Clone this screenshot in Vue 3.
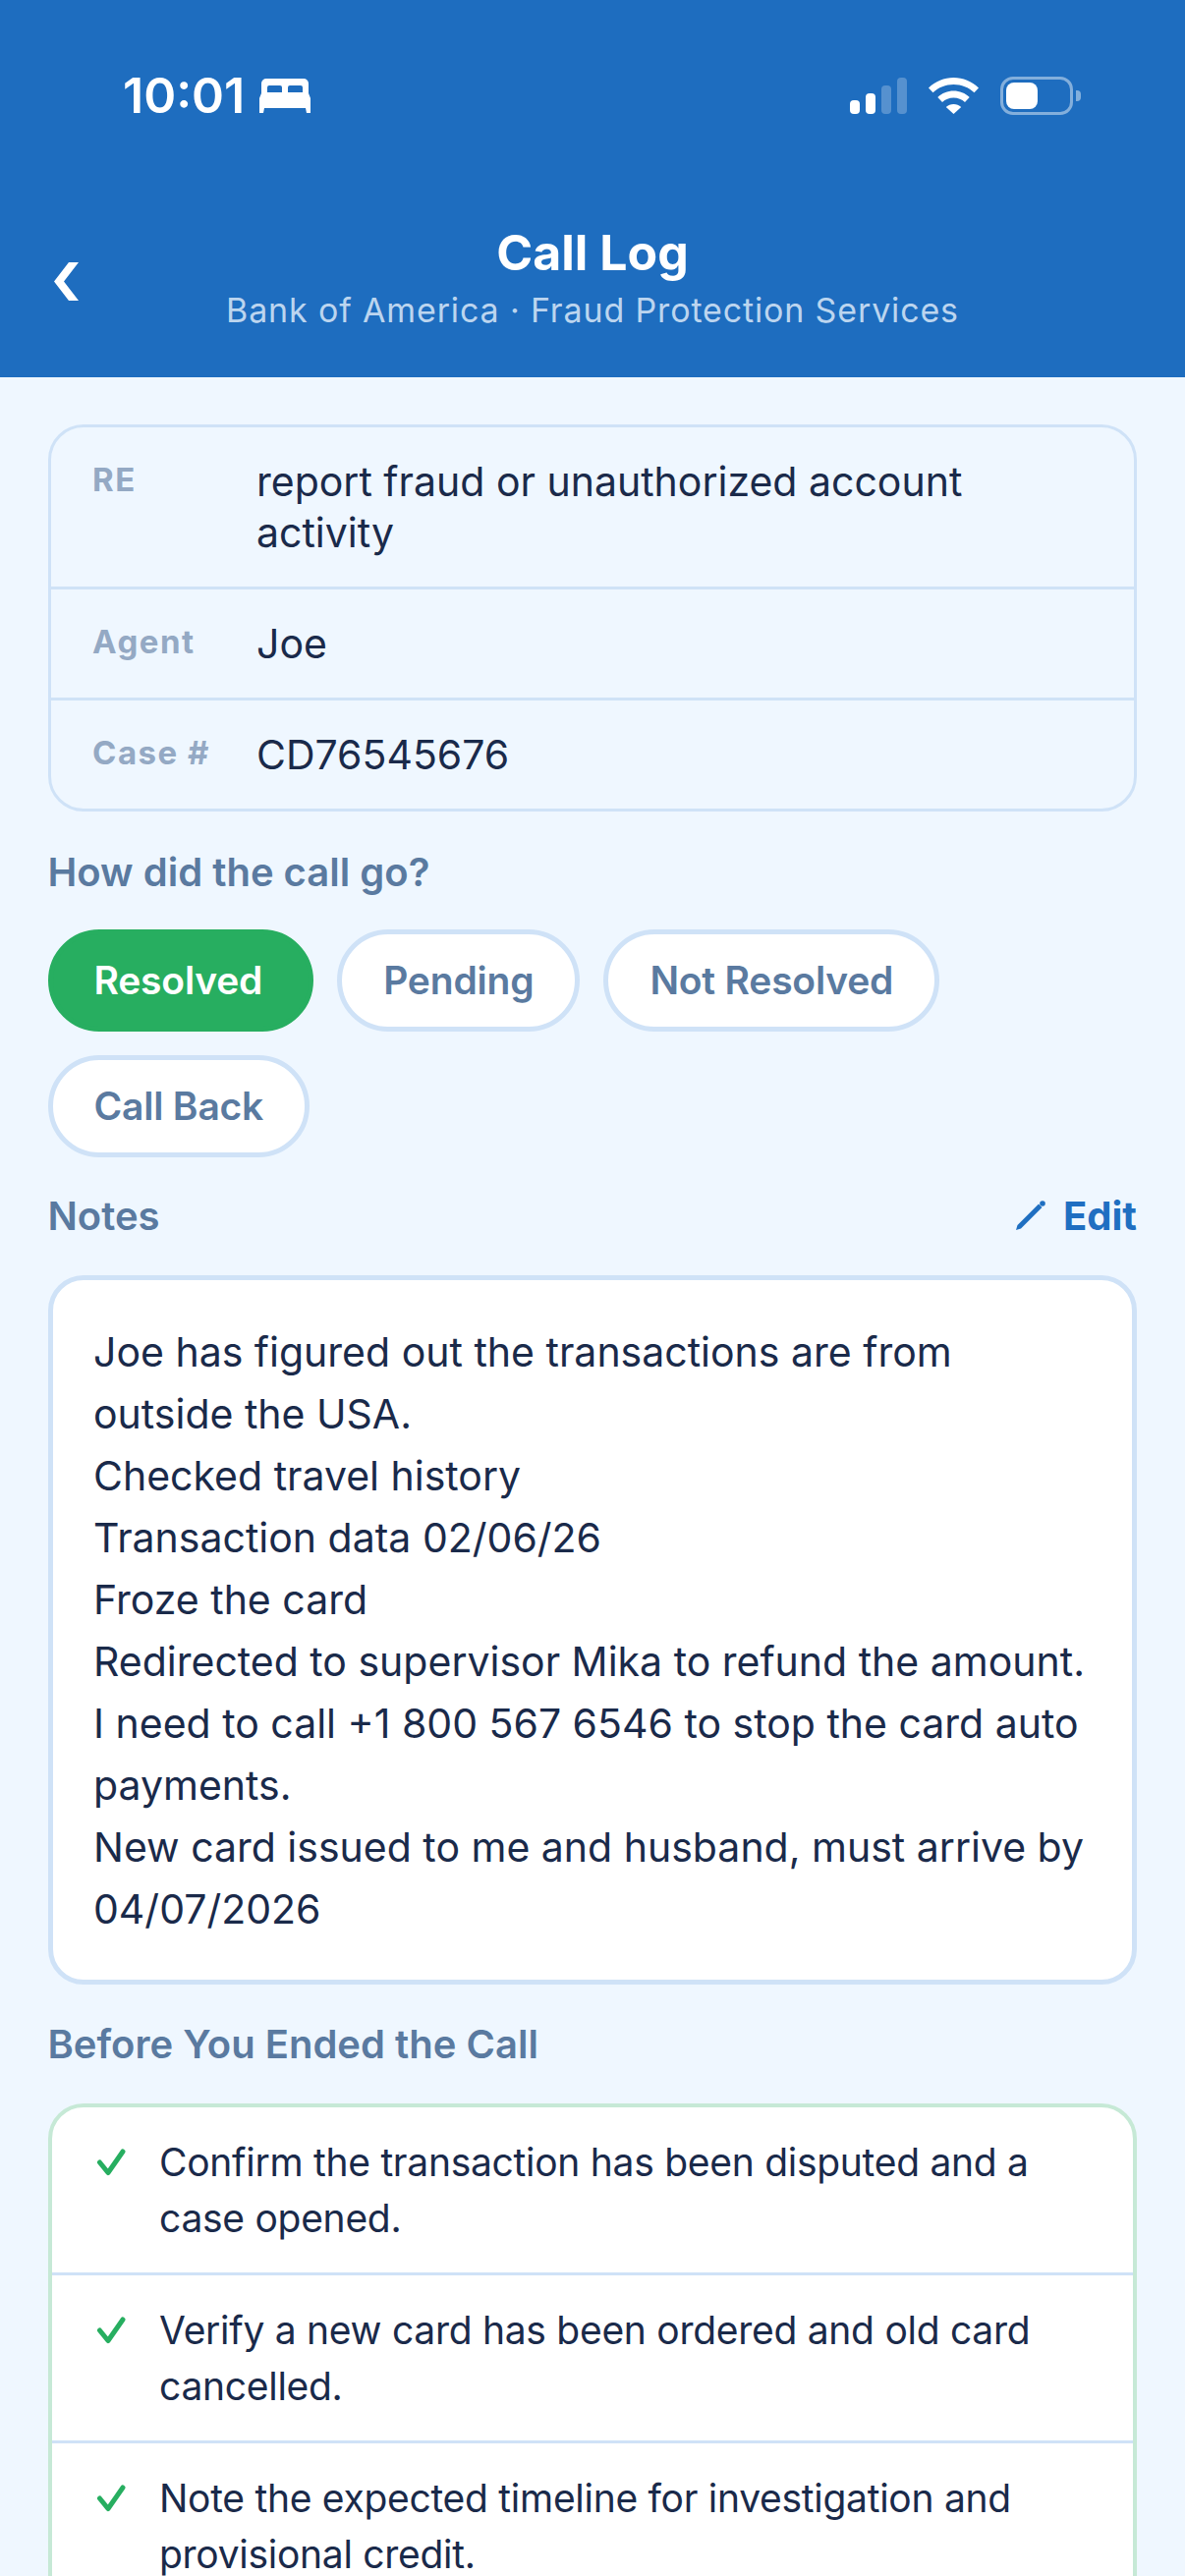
<script setup>
const info = [
  { label: 'RE', value: 'report fraud or unauthorized account activity' },
  { label: 'Agent', value: 'Joe' },
  { label: 'Case #', value: 'CD76545676' }
];

const statuses = [
  { name: 'Resolved', active: true },
  { name: 'Pending', active: false },
  { name: 'Not Resolved', active: false },
  { name: 'Call Back', active: false }
];

const notes = [
  'Joe has figured out the transactions are from outside the USA.',
  'Checked travel history',
  'Transaction data 02/06/26',
  'Froze the card',
  'Redirected to supervisor Mika to refund the amount.',
  'I need to call +1 800 567 6546 to stop the card auto payments.',
  'New card issued to me and husband, must arrive by 04/07/2026'
];

const checks = [
  'Confirm the transaction has been disputed and a case opened.',
  'Verify a new card has been ordered and old card cancelled.',
  'Note the expected timeline for investigation and provisional credit.'
];
</script>

<template>
  <div class="screen">
    <header class="top">
      <div class="status-bar">
        <div class="status-left">
          <span class="time">10:01</span>
          <svg class="bed" viewBox="0 0 52 35" width="52" height="35">
            <path fill="#fff" fill-rule="evenodd" d="M7 0h38a5 5 0 0 1 5 5v10l2 5v15h-4l-1-5H5l-1 5H0V20l2-5V5a5 5 0 0 1 5-5zM10 7a2 2 0 0 0-2 2v5h15V9a2 2 0 0 0-2-2zM31 7a2 2 0 0 0-2 2v5h15V9a2 2 0 0 0-2-2z"/>
          </svg>
        </div>
        <div class="status-right">
          <div class="signal">
            <i class="b1"></i><i class="b2"></i><i class="b3 dim"></i><i class="b4 dim"></i>
          </div>
          <svg class="wifi" viewBox="0 0 51 37" width="51" height="37">
            <path fill="#fff" d="M25.500 0C35 0 44 3.800 51 10.400l-4.500 4.900C41 10 33.500 7 25.500 7S10 10 4.500 15.300L0 10.400C7 3.800 16 0 25.500 0z"/>
            <path fill="#fff" d="M25.500 13.500c6 0 11.800 2.300 16.200 6.500l-4.700 5c-3.100-3-7.200-4.600-11.500-4.600S17.100 22 14 25l-4.700-5c4.400-4.200 10.200-6.500 16.200-6.500z"/>
            <path fill="#fff" d="M25.500 27c2.900 0 5.600 1 7.700 2.900L25.500 37l-7.700-7.100c2.100-1.900 4.800-2.900 7.700-2.900z"/>
          </svg>
          <div class="battery">
            <div class="battery-body"><div class="battery-fill"></div></div>
            <div class="battery-nub"></div>
          </div>
        </div>
      </div>
      <div class="nav">
        <svg class="back" viewBox="0 0 25 39" width="25" height="39">
          <path d="M25 0H15L0 19.500 15 39h10L10 19.500z" fill="#fff"/>
        </svg>
        <h1>Call Log</h1>
        <p>Bank of America · Fraud Protection Services</p>
      </div>
    </header>

    <main class="content">
      <section class="info-card">
        <div v-for="row in info" :key="row.label" class="info-row">
          <span class="info-label">{{ row.label }}</span>
          <span class="info-value">{{ row.value }}</span>
        </div>
      </section>

      <h2 class="section-title call-title">How did the call go?</h2>
      <div class="pills">
        <span v-for="s in statuses" :key="s.name" :class="['pill', { active: s.active }]">{{ s.name }}</span>
      </div>

      <div class="notes-head">
        <h2 class="section-title">Notes</h2>
        <span class="edit">
          <svg viewBox="0 0 32 32" width="32" height="32">
            <path d="M2 30 3.500 25 25 3.500l3.500 3.500L7 28.500z" fill="#1f6fc1"/>
            <circle cx="29" cy="3" r="2.800" fill="#1f6fc1"/>
          </svg>
          Edit
        </span>
      </div>
      <section class="notes-box">
        <p v-for="line in notes" :key="line">{{ line }}</p>
      </section>

      <h2 class="section-title before-title">Before You Ended the Call</h2>
      <section class="check-card">
        <div v-for="item in checks" :key="item" class="check-row">
          <svg class="tick" viewBox="0 0 30 30" width="30" height="30">
            <path d="M3.500 16l8.500 10.500L27 5" fill="none" stroke="#27ae60" stroke-width="5" stroke-linecap="round" stroke-linejoin="round"/>
          </svg>
          <span>{{ item }}</span>
        </div>
      </section>
    </main>
  </div>
</template>

<style scoped>
.screen {
  width: 1206px;
  height: 2622px;
  overflow: hidden;
  background: #eff7ff;
  font-family: Inter, "Liberation Sans", sans-serif;
}

.top {
  height: 384px;
  box-sizing: border-box;
  background: #1e6dbf;
  color: #fff;
}

.status-bar {
  display: flex;
  justify-content: space-between;
  align-items: center;
  padding: 78px 106px 0 125px;
  height: 39px;
}

.status-left {
  display: flex;
  align-items: center;
  gap: 15px;
}

.time {
  font-size: 50px;
  font-weight: 600;
  line-height: 39px;
}

.status-right {
  display: flex;
  align-items: center;
}

.signal {
  display: flex;
  align-items: flex-end;
  gap: 6px;
  height: 37px;
  margin-right: 22px;
}

.signal i {
  display: block;
  width: 10px;
  border-radius: 4px;
  background: #fff;
}

.signal .dim {
  background: rgba(255, 255, 255, 0.25);
}

.b1 { height: 14px; }
.b2 { height: 21px; }
.b3 { height: 29px; }
.b4 { height: 37px; }

.wifi {
  margin-right: 22px;
}

.battery {
  display: flex;
  align-items: center;
  gap: 3px;
}

.battery-body {
  width: 74px;
  height: 39px;
  box-sizing: border-box;
  border: 3px solid rgba(255, 255, 255, 0.45);
  border-radius: 13px;
  padding: 3px;
}

.battery-fill {
  width: 32px;
  height: 100%;
  border-radius: 8px;
  background: #fff;
}

.battery-nub {
  width: 5px;
  height: 11px;
  border-radius: 0 4px 4px 0;
  background: rgba(255, 255, 255, 0.45);
}

.nav {
  position: relative;
  margin-top: 110px;
  text-align: center;
}

.back {
  position: absolute;
  left: 55px;
  top: 40px;
}

.nav h1 {
  margin: 0;
  font-size: 50px;
  line-height: 60px;
  font-weight: 700;
}

.nav p {
  margin: 7px 0 0;
  font-size: 34px;
  line-height: 44px;
  letter-spacing: 0.85px;
  color: #bcd5ef;
}

.content {
  padding: 48px 49px 0 48.5px;
}

.info-card {
  border: 3px solid #cfe2f7;
  border-radius: 36px;
}

.info-row {
  display: grid;
  grid-template-columns: 167px 1fr;
  padding: 29px 42.5px;
  border-bottom: 3px solid #cfe2f7;
}

.info-row:last-child {
  border-bottom: none;
}

.info-label {
  font-size: 33px;
  line-height: 48px;
  font-weight: 700;
  letter-spacing: 1.5px;
  color: #94a9c4;
}

.info-value {
  font-size: 41px;
  line-height: 52px;
  color: #1a2a4a;
}

.section-title {
  margin: 0;
  font-size: 40px;
  line-height: 48px;
  font-weight: 600;
  color: #5a7aa0;
}

.call-title {
  margin-top: 38px;
}

.pills {
  display: flex;
  flex-wrap: wrap;
  gap: 24px;
  margin-top: 34px;
}

.pill {
  box-sizing: border-box;
  height: 104px;
  line-height: 94px;
  padding: 0 42px;
  border: 5px solid #cfe2f7;
  border-radius: 52px;
  background: #fff;
  font-size: 39px;
  font-weight: 600;
  letter-spacing: -0.2px;
  color: #5a7aa0;
}

.pill.active {
  padding-right: 47px;
  background: #27ae60;
  border-color: #27ae60;
  color: #fff;
}

.notes-head {
  display: flex;
  justify-content: space-between;
  align-items: center;
  margin-top: 36px;
}

.edit {
  display: flex;
  align-items: center;
  gap: 18px;
  font-size: 40px;
  line-height: 48px;
  font-weight: 700;
  color: #1f6fc1;
}

.notes-box {
  margin-top: 36px;
  padding: 41.5px 41.5px 40.5px;
  border: 5px solid #cfe2f7;
  border-radius: 36px;
  background: #fff;
  font-size: 41px;
  line-height: 63px;
  color: #1a2a4a;
}

.notes-box p {
  margin: 0;
}

.before-title {
  margin-top: 37px;
}

.check-card {
  margin-top: 36px;
  border: 4px solid #c6e9d6;
  border-radius: 36px;
  background: #fff;
}

.check-row {
  display: flex;
  gap: 34px;
  padding: 27px 45.5px;
  border-bottom: 3px solid #cfe2f7;
  font-size: 39px;
  line-height: 57px;
  letter-spacing: -0.28px;
  color: #1a2a4a;
}

.check-row:last-child {
  border-bottom: none;
}

.tick {
  flex: none;
  margin-top: 13px;
}
</style>

<style>
body {
  background: #eff7ff;
}
</style>
